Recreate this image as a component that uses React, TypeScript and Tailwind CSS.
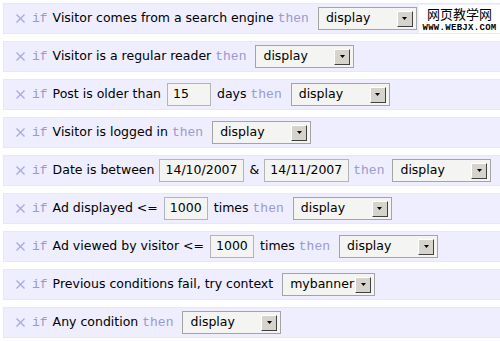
import React from "react";

const sans = "font-['DejaVu_Sans',sans-serif] text-[12.5px] text-black whitespace-nowrap";
const mono = "font-['Liberation_Mono',monospace] text-[13px] text-[#9a9acd] whitespace-nowrap";

function XIcon() {
  return (
    <svg width="9" height="9" viewBox="0 0 9 9" className="shrink-0">
      <line x1="0.5" y1="0.5" x2="8.5" y2="8.5" stroke="#a9a9e6" strokeWidth="1.3" />
      <line x1="8.5" y1="0.5" x2="0.5" y2="8.5" stroke="#a9a9e6" strokeWidth="1.3" />
    </svg>
  );
}

function Arrow() {
  return (
    <div className="w-[16px] h-[16px] shrink-0 bg-[#d6d3cc] border border-t-[#ffffff] border-l-[#ffffff] border-r-[#404040] border-b-[#404040] flex items-center justify-center">
      <svg width="5" height="3" viewBox="0 0 5 3">
        <polygon points="0,0 5,0 2.5,3" fill="#000" />
      </svg>
    </div>
  );
}

function Sel({ label, wide = true }: { label: string; wide?: boolean }) {
  return (
    <div
      className={
        (wide ? "w-[99px] " : "w-[93px] ") +
        "h-[23px] shrink-0 flex items-center justify-between border border-[#a4a4a4] bg-[#f4f4f2] pl-[7px] pr-[3px]"
      }
    >
      <span className={sans}>{label}</span>
      <Arrow />
    </div>
  );
}

function Inp({ value, w }: { value: string; w: "s" | "l" }) {
  return (
    <div
      className={
        (w === "s" ? "w-[44px] " : "w-[85px] ") +
        "h-[23px] shrink-0 flex items-center border border-[#b4b4b4] bg-[#f4f4f2] pl-[5px]"
      }
    >
      <span className={sans}>{value}</span>
    </div>
  );
}

function T({ children, ml }: { children: React.ReactNode; ml: string }) {
  return <span className={sans + " " + ml}>{children}</span>;
}

function Then() {
  return <span className={mono + " ml-[4px]"}>then</span>;
}

function Row({ children }: { children: React.ReactNode }) {
  return (
    <div className="flex items-center h-[31px] w-[515px] border border-[#ececd6] bg-[#eeeeff] pl-[12px] mb-[7px] shrink-0">
      <XIcon />
      <span className={mono + " ml-[7px]"}>if</span>
      {children}
    </div>
  );
}

export default function App() {
  return (
    <div className="relative w-[500px] h-[341px] overflow-hidden bg-white pt-[3px] pl-[3px] flex flex-col">
      <Row>
        <T ml="ml-[5px]">Visitor comes from a search engine</T>
        <Then />
        <div className="ml-[9px]"><Sel label="display" /></div>
      </Row>
      <Row>
        <T ml="ml-[5px]">Visitor is a regular reader</T>
        <Then />
        <div className="ml-[9px]"><Sel label="display" /></div>
      </Row>
      <Row>
        <T ml="ml-[5px]">Post is older than</T>
        <div className="ml-[6px]"><Inp value="15" w="s" /></div>
        <T ml="ml-[6px]">days</T>
        <Then />
        <div className="ml-[9px]"><Sel label="display" /></div>
      </Row>
      <Row>
        <T ml="ml-[5px]">Visitor is logged in</T>
        <Then />
        <div className="ml-[9px]"><Sel label="display" /></div>
      </Row>
      <Row>
        <T ml="ml-[5px]">Date is between</T>
        <div className="ml-[5px]"><Inp value="14/10/2007" w="l" /></div>
        <T ml="ml-[5px]">&amp;</T>
        <div className="ml-[5px]"><Inp value="14/11/2007" w="l" /></div>
        <Then />
        <div className="ml-[8px]"><Sel label="display" /></div>
      </Row>
      <Row>
        <T ml="ml-[5px]">Ad displayed &lt;=</T>
        <div className="ml-[6px]"><Inp value="1000" w="s" /></div>
        <T ml="ml-[6px]">times</T>
        <Then />
        <div className="ml-[9px]"><Sel label="display" /></div>
      </Row>
      <Row>
        <T ml="ml-[5px]">Ad viewed by visitor &lt;=</T>
        <div className="ml-[6px]"><Inp value="1000" w="s" /></div>
        <T ml="ml-[6px]">times</T>
        <Then />
        <div className="ml-[9px]"><Sel label="display" /></div>
      </Row>
      <Row>
        <T ml="ml-[5px]">Previous conditions fail, try context</T>
        <div className="ml-[9px]"><Sel label="mybanner" wide={false} /></div>
      </Row>
      <Row>
        <T ml="ml-[5px]">Any condition</T>
        <Then />
        <div className="ml-[9px]"><Sel label="display" /></div>
      </Row>

      <div className="absolute top-[5px] left-[419px] w-[81px] h-[28px] bg-white flex flex-col items-center">
        <span className="font-['Noto_Sans_CJK_SC',sans-serif] text-[13px] leading-[17px] text-black">网页教学网</span>
        <span className="mt-[2px] font-['Liberation_Mono',monospace] font-bold text-[9px] leading-[9px] text-black tracking-[0.3px]">WWW.WEBJX.COM</span>
      </div>
    </div>
  );
}
